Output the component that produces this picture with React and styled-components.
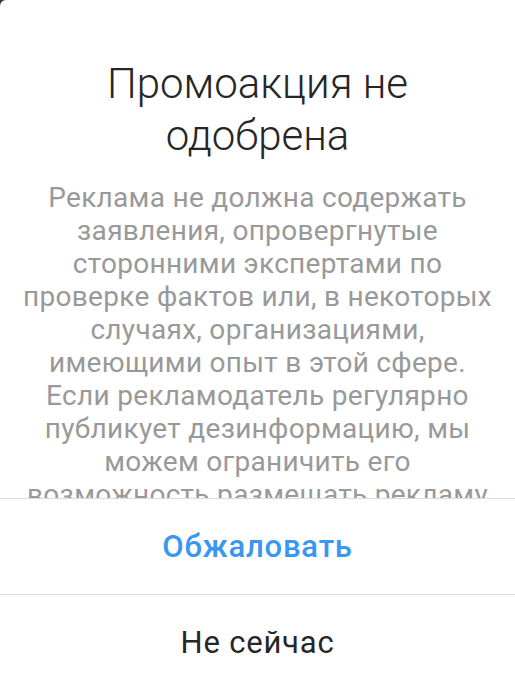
import React from "react";
import styled, { createGlobalStyle } from "styled-components";

const GlobalStyle = createGlobalStyle`
  html, body {
    margin: 0;
    padding: 0;
    background: #3a3a3a;
  }
`;

const Sheet = styled.div`
  display: flex;
  flex-direction: column;
  width: 515px;
  height: 681px;
  overflow: hidden;
  background: #fff;
  border-top-left-radius: 6px;
  font-family: Roboto, "Noto Sans", sans-serif;
`;

const Content = styled.div`
  height: 498px;
  flex: none;
  overflow: hidden;
  padding: 58px 10px 0;
  box-sizing: border-box;
  text-align: center;
`;

const Title = styled.h1`
  margin: 0;
  font-size: 42px;
  font-weight: 300;
  line-height: 52px;
  color: #262626;
`;

const Body = styled.p`
  margin: 19px 0 0;
  font-size: 28px;
  letter-spacing: 0.3px;
  line-height: 33px;
  color: #999;
`;

const Line = styled.span`
  display: block;
  white-space: nowrap;
`;

const Action = styled.button`
  flex: none;
  height: 96px;
  border: none;
  border-top: 1px solid #dbdbdb;
  background: #fff;
  font-family: inherit;
  font-size: 31px;
  letter-spacing: 0.8px;
  font-weight: ${(p) => (p.$primary ? 500 : 400)};
  color: ${(p) => (p.$primary ? "#3897f0" : "#262626")};
  cursor: pointer;
`;

const titleLines = ["Промоакция не", "одобрена"];

const bodyLines = [
  "Реклама не должна содержать",
  "заявления, опровергнутые",
  "сторонними экспертами по",
  "проверке фактов или, в некоторых",
  "случаях, организациями,",
  "имеющими опыт в этой сфере.",
  "Если рекламодатель регулярно",
  "публикует дезинформацию, мы",
  "можем ограничить его",
  "возможность размещать рекламу",
  "на Facebook.",
];

export default function App() {
  return (
    <>
      <GlobalStyle />
      <Sheet>
        <Content>
          <Title>
            {titleLines.map((line) => (
              <Line key={line}>{line}</Line>
            ))}
          </Title>
          <Body>
            {bodyLines.map((line) => (
              <Line key={line}>{line}</Line>
            ))}
          </Body>
        </Content>
        <Action $primary>Обжаловать</Action>
        <Action>Не сейчас</Action>
      </Sheet>
    </>
  );
}
